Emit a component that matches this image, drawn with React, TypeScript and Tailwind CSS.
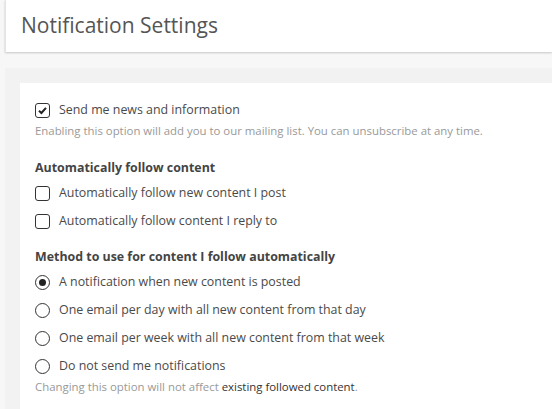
import React from "react";

const font = { fontFamily: '"Open Sans", "Noto Sans", sans-serif' };

function Check({ checked, label }: { checked?: boolean; label: string }) {
  return (
    <div className="flex items-center h-[28px]">
      <span className="w-[15px] h-[15px] border border-[#333] rounded-[3px] flex items-center justify-center bg-white">
        {checked && (
          <svg width="11" height="11" viewBox="0 0 11 11">
            <path d="M2 5.8 L4.4 8 L9 2.8" fill="none" stroke="#222" strokeWidth="2" />
          </svg>
        )}
      </span>
      <span className="ml-[9px] text-[12.4px] text-[#4a4a4a]">{label}</span>
    </div>
  );
}

function Radio({ checked, label }: { checked?: boolean; label: string }) {
  return (
    <div className="flex items-center h-[28px]">
      <span className="w-[15px] h-[15px] border border-[#333] rounded-full flex items-center justify-center bg-white">
        {checked && <span className="w-[7px] h-[7px] rounded-full bg-[#222]" />}
      </span>
      <span className="ml-[9px] text-[12.4px] text-[#4a4a4a]">{label}</span>
    </div>
  );
}

export default function App() {
  return (
    <div className="w-[552px] h-[409px] overflow-hidden bg-[#f7f7f7]" style={font}>
      <div className="ml-[5px] h-[52px] bg-white shadow-[0_1px_2px_rgba(0,0,0,0.2)] border-l border-[#e4e4e4] flex items-center pl-[15px]">
        <h1 className="text-[21px] text-[#555] font-normal leading-none -mt-[2px]">Notification Settings</h1>
      </div>
      <div className="ml-[5px] mt-[16px] bg-[#f2f2f2] pl-[15px] pt-[15px] h-[400px]">
        <div className="bg-white h-full pl-[15px] pt-[13px]">
          <Check checked label="Send me news and information" />
          <p className="text-[11.4px] text-[#999] -mt-[2px]">
            Enabling this option will add you to our mailing list. You can unsubscribe at any time.
          </p>
          <h3 className="mt-[20px] mb-[2px] text-[12.4px] font-bold text-[#444]">Automatically follow content</h3>
          <Check label="Automatically follow new content I post" />
          <Check label="Automatically follow content I reply to" />
          <h3 className="mt-[12px] mb-[2px] text-[12.4px] font-bold text-[#444]">Method to use for content I follow automatically</h3>
          <Radio checked label="A notification when new content is posted" />
          <Radio label="One email per day with all new content from that day" />
          <Radio label="One email per week with all new content from that week" />
          <Radio label="Do not send me notifications" />
          <p className="text-[11.4px] text-[#999] -mt-[2px]">
            Changing this option will not affect <span className="text-[#333]">existing followed content</span>.
          </p>
        </div>
      </div>
    </div>
  );
}
